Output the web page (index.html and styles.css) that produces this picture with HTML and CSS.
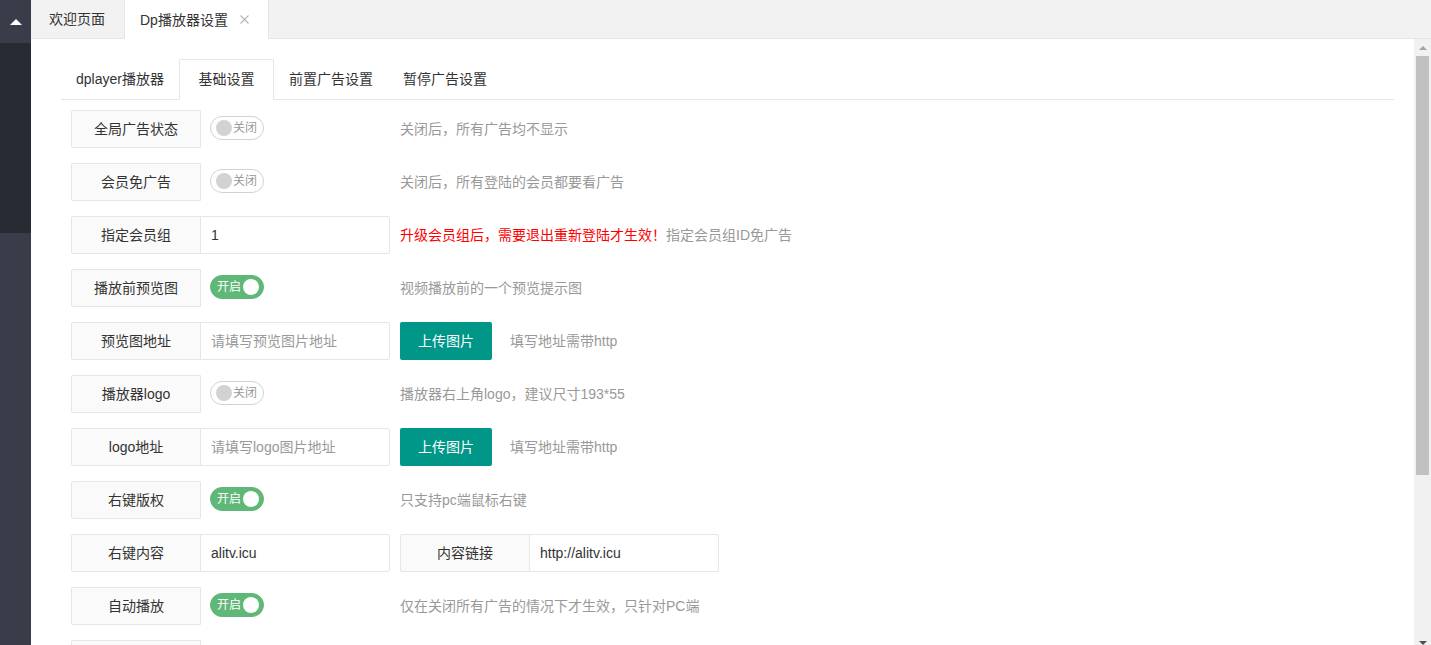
FILE: index.html
```html
<!DOCTYPE html>
<html lang="zh-CN">
<head>
<meta charset="utf-8">
<title>Dp播放器设置</title>
<link rel="stylesheet" href="styles.css">
</head>
<body>
<aside class="side">
  <div class="side-top"><span class="tri"></span></div>
  <div class="side-dark"></div>
</aside>
<div class="main">
  <div class="topbar">
    <div class="ttab">欢迎页面</div>
    <div class="ttab on">Dp播放器设置<svg class="close" width="9" height="9" viewBox="0 0 9 9"><path d="M0.5 0.5L8.5 8.5M8.5 0.5L0.5 8.5" stroke="#b5b5b5" stroke-width="1.1" fill="none"/></svg></div>
  </div>
  <div class="body-wrap">
    <div class="frame">
      <div class="frame-in">
        <div class="tabs">
          <ul class="tab-title">
            <li>dplayer播放器</li>
            <li class="this">基础设置</li>
            <li>前置广告设置</li>
            <li>暂停广告设置</li>
          </ul>
          <div class="tab-content">
            <div class="row">
              <label class="label">全局广告状态</label>
              <div class="inline"><span class="switch off"><i></i><em>关闭</em></span></div>
              <div class="mid">关闭后，所有广告均不显示</div>
            </div>
            <div class="row">
              <label class="label">会员免广告</label>
              <div class="inline"><span class="switch off"><i></i><em>关闭</em></span></div>
              <div class="mid">关闭后，所有登陆的会员都要看广告</div>
            </div>
            <div class="row">
              <label class="label">指定会员组</label>
              <div class="inline"><input class="input" value="1"></div>
              <div class="mid"><span class="red">升级会员组后，需要退出重新登陆才生效！</span>指定会员组ID免广告</div>
            </div>
            <div class="row">
              <label class="label">播放前预览图</label>
              <div class="inline"><span class="switch on"><em>开启</em><i></i></span></div>
              <div class="mid">视频播放前的一个预览提示图</div>
            </div>
            <div class="row">
              <label class="label">预览图地址</label>
              <div class="inline"><input class="input" placeholder="请填写预览图片地址"></div>
              <button class="btn" type="button">上传图片</button>
              <div class="mid">填写地址需带http</div>
            </div>
            <div class="row">
              <label class="label">播放器logo</label>
              <div class="inline"><span class="switch off"><i></i><em>关闭</em></span></div>
              <div class="mid">播放器右上角logo，建议尺寸193*55</div>
            </div>
            <div class="row">
              <label class="label">logo地址</label>
              <div class="inline"><input class="input" placeholder="请填写logo图片地址"></div>
              <button class="btn" type="button">上传图片</button>
              <div class="mid">填写地址需带http</div>
            </div>
            <div class="row">
              <label class="label">右键版权</label>
              <div class="inline"><span class="switch on"><em>开启</em><i></i></span></div>
              <div class="mid">只支持pc端鼠标右键</div>
            </div>
            <div class="row">
              <label class="label">右键内容</label>
              <div class="inline"><input class="input" value="alitv.icu"></div>
              <label class="label">内容链接</label>
              <div class="inline"><input class="input" value="http://alitv.icu"></div>
            </div>
            <div class="row">
              <label class="label">自动播放</label>
              <div class="inline"><span class="switch on"><em>开启</em><i></i></span></div>
              <div class="mid">仅在关闭所有广告的情况下才生效，只针对PC端</div>
            </div>
            <div class="row">
              <label class="label"></label>
            </div>
          </div>
        </div>
      </div>
    </div>
    <div class="vscroll">
      <div class="sb-btn"><span class="arr up"></span></div>
      <div class="sb-track"><div class="sb-thumb"></div></div>
      <div class="sb-btn"><span class="arr down"></span></div>
    </div>
  </div>
</div>
</body>
</html>
```
FILE: styles.css
```css
html {
  overflow: hidden;
}
body {
  margin: 0;
  height: 651px;
  display: flex;
  font: 14px "Liberation Sans", "Noto Sans CJK SC", sans-serif;
  color: #333;
}
.side {
  width: 31px;
  flex: none;
  background: #393d49;
  display: flex;
  flex-direction: column;
}
.side-top {
  height: 43px;
  display: flex;
  align-items: center;
  justify-content: center;
}
.tri {
  width: 0;
  height: 0;
  border-left: 6px solid transparent;
  border-right: 6px solid transparent;
  border-bottom: 6px solid #fff;
}
.side-dark {
  height: 190px;
  background: #282b33;
}
.main {
  flex: 1;
  min-width: 0;
  display: flex;
  flex-direction: column;
}
.topbar {
  height: 38px;
  flex: none;
  background: #f2f2f2;
  border-bottom: 1px solid #e6e6e6;
  display: flex;
}
.ttab {
  padding: 0 19px 0 18px;
  line-height: 38px;
  color: #333;
  display: flex;
  align-items: center;
}
.ttab.on {
  background: #fff;
  height: 39px;
  margin-bottom: -1px;
  padding: 0 19px 0 15px;
  border-left: 1px solid #e6e6e6;
  border-right: 1px solid #e6e6e6;
}
.close {
  margin-left: 12px;
}
.body-wrap {
  flex: 1;
  min-height: 0;
  display: flex;
}
.frame {
  flex: 1;
  min-width: 0;
  overflow: hidden;
  background: #fff;
}
.vscroll {
  width: 17px;
  flex: none;
  background: #f1f1f1;
  display: flex;
  flex-direction: column;
}
.sb-btn {
  height: 17px;
  flex: none;
  display: flex;
  align-items: center;
  justify-content: center;
}
.arr {
  width: 0;
  height: 0;
  border-left: 4px solid transparent;
  border-right: 4px solid transparent;
}
.arr.up {
  border-bottom: 4px solid #a3a3a3;
}
.arr.down {
  border-top: 4px solid #505050;
}
.sb-track {
  flex: 1;
  padding: 0 2px;
}
.sb-thumb {
  height: 419px;
  background: #c1c1c1;
}
.frame-in {
  padding: 10px 20px 11px 30px;
}
.tabs {
  margin: 10px 0;
}
.tab-title {
  list-style: none;
  margin: 0;
  padding: 0;
  height: 40px;
  border-bottom: 1px solid #e6e6e6;
  display: flex;
}
.tab-title li {
  position: relative;
  min-width: 65px;
  padding: 0 15px;
  line-height: 40px;
  text-align: center;
  color: #333;
}
.tab-title li.this::after {
  content: "";
  position: absolute;
  left: 0;
  top: 0;
  width: 100%;
  height: 41px;
  box-sizing: border-box;
  border: 1px solid #e6e6e6;
  border-bottom-color: #fff;
  border-radius: 2px 2px 0 0;
}
.tab-content {
  padding: 10px;
}
.row {
  display: flex;
  height: 38px;
  margin-bottom: 15px;
}
.label {
  flex: none;
  width: 130px;
  height: 38px;
  box-sizing: border-box;
  padding: 8px 15px;
  line-height: 20px;
  border: 1px solid #e6e6e6;
  border-radius: 2px 0 0 2px;
  background: #fafafa;
  text-align: center;
  color: #333;
}
.inline {
  flex: none;
  width: 190px;
  margin-left: -1px;
  margin-right: 10px;
}
.input {
  display: block;
  width: 100%;
  height: 38px;
  box-sizing: border-box;
  margin: 0;
  padding: 0 0 0 10px;
  border: 1px solid #e6e6e6;
  border-radius: 0 2px 2px 0;
  font: inherit;
  color: #333;
  background: #fff;
  outline: none;
}
.input::placeholder {
  color: #999;
}
.switch {
  display: flex;
  align-items: center;
  width: 54px;
  height: 24px;
  box-sizing: border-box;
  margin: 6px 0 0 10px;
  border: 1px solid #d2d2d2;
  border-radius: 20px;
  background: #fff;
  font-size: 12px;
}
.switch i {
  width: 16px;
  height: 16px;
  border-radius: 50%;
  background: #d2d2d2;
  flex: none;
}
.switch em {
  font-style: normal;
  line-height: 22px;
}
.switch.off {
  padding: 0 0 0 5px;
  gap: 1px;
}
.switch.off em {
  color: #999;
}
.switch.on {
  padding: 0 0 0 6px;
  gap: 2px;
  background: #5fb878;
  border-color: #5fb878;
}
.switch.on em {
  color: #fff;
}
.switch.on i {
  background: #fff;
}
.mid {
  padding: 9px 0;
  line-height: 20px;
  color: #999;
  white-space: nowrap;
}
.red {
  color: #ff0000;
}
.btn {
  flex: none;
  height: 38px;
  margin: 0 18px 0 0;
  padding: 0 18px;
  border: none;
  border-radius: 2px;
  background: #009688;
  color: #fff;
  font: inherit;
  line-height: 38px;
}
```
